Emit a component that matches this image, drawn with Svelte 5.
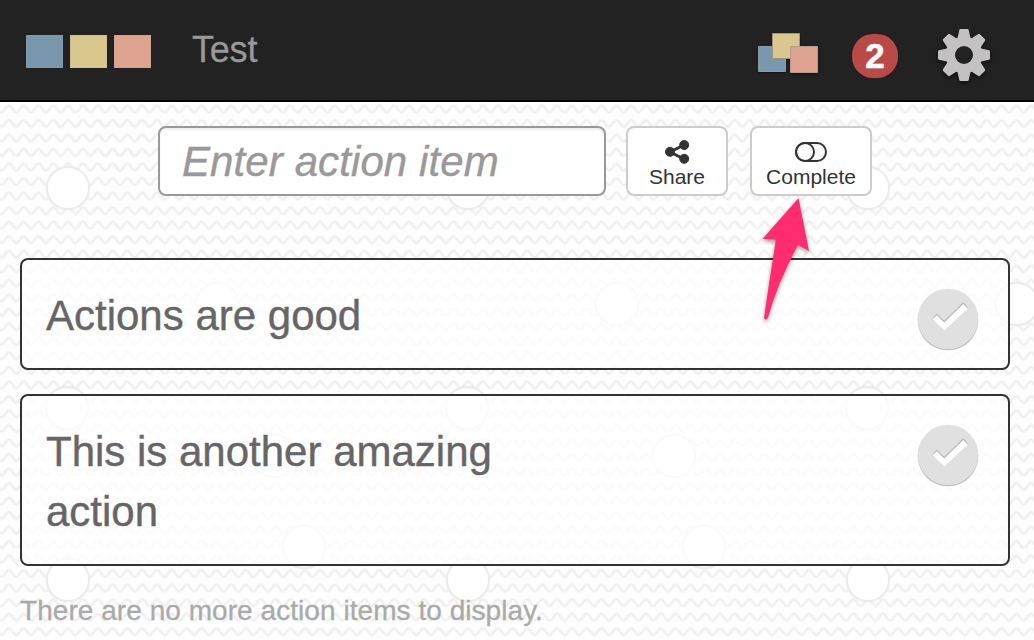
<script>
  const actions = ['Actions are good', 'This is another amazing action'];
  const rows = Array.from({ length: 27 }, (_, i) => i * 14.52);
  const cols = Array.from({ length: 29 }, (_, i) => i);
  const w = 400 / 27;
  const wave = 'M-14.815 4' + cols.map((i) => {
    const x = (i - 1) * w;
    return `C${x + 2.8} 4 ${x + 4.6} -3 ${x + w / 2} -3S${x + w - 2.8} 4 ${x + w} 4`;
  }).join('');
  const dots = [[68, 188], [217, 304], [67, 408], [274, 456], [304, 547]];
</script>

<div class="page">
  <svg class="bg" width="1034" height="640" aria-hidden="true">
    <defs>
      <pattern id="waves" x="1.5" y="103.5" width="400" height="392" patternUnits="userSpaceOnUse">
        {#each rows as y}
          <path d={wave} transform={`translate(0 ${y + 5})`} fill="none" stroke="#efefef" stroke-width="2.5" />
        {/each}
      </pattern>
    </defs>
    <rect width="1034" height="640" fill="#fefefe" />
    <rect width="1034" height="640" fill="url(#waves)" />
    {#each dots as [x, y]}
      {#each [0, 400, 800] as dx}
        {#each [0, 392] as dy}
          <circle cx={x + dx} cy={y + dy} r="21.2" fill="#fefefe" stroke="#ebebeb" stroke-width="2.2" />
        {/each}
      {/each}
    {/each}
  </svg>

  <header>
    <div class="logo"><i class="blue"></i><i class="yellow"></i><i class="pink"></i></div>
    <h1>Test</h1>
    <div class="tools">
      <svg class="notes" width="64" height="44" viewBox="0 0 64 44">
        <path fill="#7a98ad" stroke="#8b9ba6" d="M2.5 15.5h27v25h-27z" />
        <path fill="#dac78d" stroke="#9e987f" d="M16.5 2.5h27v25h-27z" />
        <path fill="#dfa48f" stroke="#b69b92" d="M34.5 15.5h27v26h-27z" />
      </svg>
      <span class="count">2</span>
      <svg class="gear" width="54" height="54" viewBox="-27 -27 54 54">
        <g fill="#c3c1c2">
          {#each [0, 45, 90, 135] as a}
            <path transform={`rotate(${a})`} d="M-3.5-26h7q1 0 1.200 1l2 9v32l-2 9q-.2 1-1.200 1h-7q-1 0-1.200-1l-2-9v-32l2-9q.2-1 1.200-1z" />
          {/each}
          <circle r="18.500" />
        </g>
        <circle r="9" fill="#222" />
      </svg>
    </div>
  </header>

  <main>
    <div class="controls">
      <input placeholder="Enter action item" aria-label="Enter action item" />
      <button class="share">
        <svg width="26" height="26" viewBox="0 0 26 26" fill="#333" stroke="#333">
          <path d="M20 6 6 13l14 7" fill="none" stroke-width="3" />
          <circle cx="6" cy="12.8" r="4.5" /><circle cx="20.2" cy="6" r="4.500" /><circle cx="20.2" cy="19.800" r="4.500" />
        </svg>
        <span>Share</span>
      </button>
      <button class="complete">
        <svg width="34" height="26" viewBox="0 0 34 26" fill="none" stroke="#333" stroke-width="2">
          <rect x="2" y="4" width="30" height="18" rx="9" /><circle cx="11" cy="13" r="9" />
        </svg>
        <span>Complete</span>
      </button>
    </div>

    <ul>
      {#each actions as action}
        <li>
          <p>{action}</p>
          <svg class="check" width="64" height="64" viewBox="0 0 64 64">
            <circle cx="32" cy="32" r="30.3" fill="#b8b8b8" />
            <circle cx="32" cy="31" r="30.2" fill="#e0e0e0" />
            <path d="M16 30.300 21 25.700l7.300 7 19-18.400 5 5.700-24 22.700z" fill="#b8b8b8" />
            <path d="M16.500 31 21 27.200l7.300 7.300 19-18.400 4.700 4.400-23.700 22.200z" fill="#fff" />
          </svg>
        </li>
      {/each}
    </ul>
    <p class="empty">There are no more action items to display.</p>
  </main>

  <svg class="arrow" width="64" height="136" viewBox="0 0 64 136">
    <path d="M42.500 4 53 57 42 51Q21 90 12 123.500Q9.500 127 8 124Q14 82 20 45.500L6.500 45Z" fill="#ff2d70" />
  </svg>
</div>

<style>
  :global(body) { margin: 0; overflow: hidden; }
  .page { position: relative; width: 1034px; height: 640px; overflow: hidden; font-family: "Liberation Sans", Arial, sans-serif; }
  .bg { position: absolute; inset: 0; }
  header { position: relative; box-sizing: border-box; height: 102px; padding: 0 43px 0 25px; display: flex; align-items: center; background: #222; border-bottom: 2px solid #000; }
  .logo { display: flex; gap: 7px; padding: 2px 0 0 1px; }
  .logo i { box-sizing: border-box; width: 37px; height: 33px; border: 1px solid #9993; }
  .blue { background: #7a98ad; }
  .yellow { background: #dac78d; }
  .pink { background: #dfa48f; }
  h1 { margin: 0 0 0 41px; font-size: 36px; line-height: 40px; font-weight: 400; color: #999; letter-spacing: -.2px; -webkit-text-stroke: .3px #999; }
  .tools { display: flex; align-items: center; margin-left: auto; padding-top: 9px; }
  .notes { margin: -4px 32px 0 0; filter: drop-shadow(0 1px 1px #111); }
  .count { display: flex; align-items: center; justify-content: center; width: 46px; height: 44px; margin: 2px 39px 0 0; border-radius: 21px; background: #b94a48; color: #fff; font-size: 35px; font-weight: 700; -webkit-text-stroke: .5px #fff; }
  .gear { filter: drop-shadow(0 2px 2px #0008); }
  main { position: relative; padding: 24px 24px 0 20px; }
  .controls { display: flex; height: 70px; padding-left: 138px; }
  input, button { box-sizing: border-box; height: 70px; border: 2px solid #ccc; border-radius: 8px; background: #fff; font-family: inherit; }
  input { width: 448px; padding: 2px 22px 0; border-color: #999; font-size: 42px; font-style: italic; letter-spacing: .1px; box-shadow: inset 0 2px 2px #0001; }
  input::placeholder { color: #999; opacity: 1; -webkit-text-stroke: .4px #999; }
  button { display: flex; flex-direction: column; align-items: center; padding: 11px 0 0; font-size: 21px; line-height: 24px; color: #333; }
  .share { width: 102px; margin-left: 20px; }
  .complete { width: 122px; margin-left: 22px; }
  button svg { flex: none; }
  ul { list-style: none; margin: 62px 0 0; padding: 0; display: flex; flex-direction: column; gap: 24px; }
  li { box-sizing: border-box; display: flex; justify-content: space-between; align-items: flex-start; padding: 26px 28px 22px 24px; border: 2px solid #333; border-radius: 8px; background: #ffffffb8; }
  li p { margin: 0; width: 480px; font-size: 42px; line-height: 60px; color: #666; -webkit-text-stroke: .4px #666; }
  .check { flex: none; margin-top: 2px; margin-bottom: -8px; }
  .empty { margin: 29px 0 0; font-size: 28px; line-height: 32px; letter-spacing: .05px; color: #aaa; -webkit-text-stroke: .3px #aaa; }
  .arrow { position: absolute; left: 756px; top: 194px; filter: drop-shadow(0 2px 2px #0006); }
</style>
